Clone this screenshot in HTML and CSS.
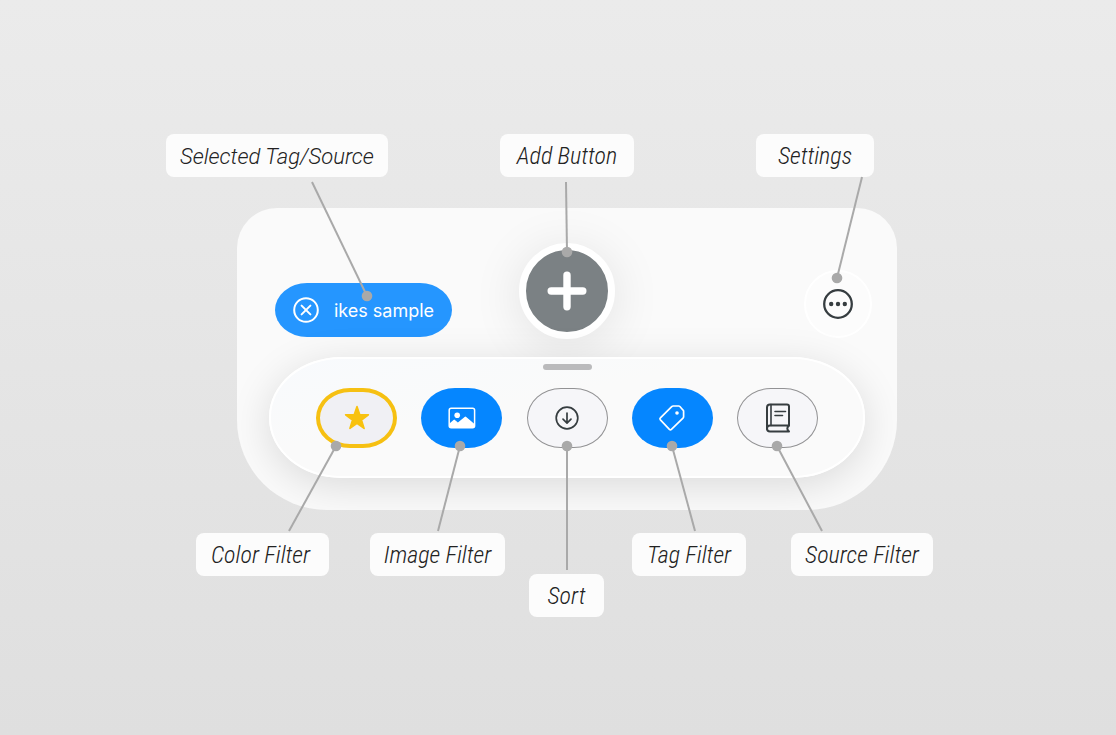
FILE: index.html
```
<!DOCTYPE html>
<html lang="en">
<head>
  <meta charset="UTF-8" />
  <meta name="viewport" content="width=device-width, initial-scale=1" />
  <title>Toolbar overview</title>
  <link rel="stylesheet" href="styles.css">
</head>
<body>
  <main class="diagram">
    <div class="labels labels-top">
      <span class="label label-wide label-selected">Selected Tag/Source</span>
      <span class="label label-add">Add Button</span>
      <span class="label label-settings">Settings</span>
    </div>

    <section class="panel">
      <div class="panel-top">
        <button class="selected-tag" type="button">
          <svg width="26" height="26" viewBox="0 0 26 26" fill="none" stroke="#fff" stroke-width="2" stroke-linecap="round">
            <circle cx="13" cy="13" r="11.8" />
            <path d="M8.6 8.6l8.8 8.8M17.4 8.6l-8.8 8.8" />
          </svg>
          ikes sample
        </button>
        <button class="add-button" type="button" aria-label="Add">
          <svg width="40" height="40" viewBox="0 0 40 40" stroke="#fff" stroke-width="7.4" stroke-linecap="round">
            <path d="M20 4.2v31.6M4.2 20h31.6" />
          </svg>
        </button>
        <button class="settings-button" type="button" aria-label="Settings">
          <svg width="30" height="30" viewBox="0 0 30 30" fill="#363d40">
            <circle cx="15" cy="15" r="13.8" fill="none" stroke="#363d40" stroke-width="2.3" />
            <circle cx="8.2" cy="15" r="2.2" />
            <circle cx="15" cy="15" r="2.2" />
            <circle cx="21.8" cy="15" r="2.2" />
          </svg>
        </button>
      </div>

      <div class="tray">
        <div class="handle"></div>
        <div class="filters">
          <button class="pill pill-color" type="button" aria-label="Color filter">
            <svg width="26" height="26" viewBox="0 0 26 26" fill="#f8c20f" stroke="#f8c20f" stroke-width="1.6" stroke-linejoin="round">
              <path d="M13 1.6l2.8 8.2h8.6l-6.9 5.2 2.6 8.4L13 18.3l-7.1 5.1L8.5 15 1.6 9.8h8.6z" />
            </svg>
          </button>
          <button class="pill pill-on" type="button" aria-label="Image filter">
            <svg width="28" height="22" viewBox="0 0 28 22">
              <rect x="1.2" y="1.2" width="25.4" height="19.6" rx="2" fill="none" stroke="#fff" stroke-width="1.5" />
              <circle cx="9.2" cy="8.2" r="2.8" fill="#fff" />
              <path d="M1.5 16.5l4-3.6q.7-.6 1.4 0l3 2.6 6.7-5.6q.8-.6 1.6 0l8.3 7.1v1.8q0 2-2 2h-21q-2 0-2-2z" fill="#fff" />
            </svg>
          </button>
          <button class="pill" type="button" aria-label="Sort">
            <svg width="24" height="24" viewBox="0 0 24 24" fill="none" stroke="#363d40" stroke-width="1.7" stroke-linecap="round" stroke-linejoin="round">
              <circle cx="12" cy="12" r="10.8" />
              <path d="M12 7v10M8 13.2l4 3.9 4-3.9" />
            </svg>
          </button>
          <button class="pill pill-on" type="button" aria-label="Tag filter">
            <svg width="28" height="28" viewBox="0 0 28 28" fill="none" stroke="#fff" stroke-width="1.7" stroke-linejoin="round">
              <path d="M15.2 2h5.4q.8 0 1.3.5l3.2 3.7q.5.5.5 1.2v5.3q0 .8-.6 1.4L13.4 25.3q-1 1-2 0l-9-9.4q-1-1.1 0-2.1L13.7 2.6q.6-.6 1.5-.6z" />
              <circle cx="19" cy="9" r="1.8" fill="#fff" stroke="none" />
            </svg>
          </button>
          <button class="pill" type="button" aria-label="Source filter">
            <svg width="26" height="32" viewBox="0 0 26 32" fill="none" stroke="#363d40" stroke-width="2" stroke-linecap="round" stroke-linejoin="round">
              <path d="M24 23.5V4.4q0-2-2-2H5q-3 0-3 3V27" />
              <path d="M24 23.6H5q-3 0-3 3t3 3h19q-3.4-3 0-6z" />
              <path d="M6 2.5v21" stroke-width="1.6" />
              <path d="M10 9.5h10.5M10 13.5h7.5" stroke-width="1.6" />
            </svg>
          </button>
        </div>
      </div>
    </section>

    <div class="labels labels-bottom">
      <span class="label label-color">Color Filter</span>
      <span class="label label-image">Image Filter</span>
      <span class="label label-sort">Sort</span>
      <span class="label label-tag">Tag Filter</span>
      <span class="label label-source">Source Filter</span>
    </div>

    <!-- leader lines from each label to its control -->
    <svg class="leaders" width="784" height="483" viewBox="0 0 784 483">
      <g stroke="#a9a9a9" stroke-width="2">
        <path d="M146 48l55 114" />
        <path d="M400 48l1 70" />
        <path d="M696 43l-25 101" />
        <path d="M170 312l-47 85" />
        <path d="M294 312l-22 85" />
        <path d="M401 312v124" />
        <path d="M506 312l23 85" />
        <path d="M611 312l45 85" />
      </g>
      <g fill="#a9a9a9">
        <circle cx="201" cy="162" r="5.3" />
        <circle cx="401" cy="118" r="5.3" />
        <circle cx="671" cy="144" r="5.3" />
        <circle cx="170" cy="312" r="5.3" />
        <circle cx="294" cy="312" r="5.3" />
        <circle cx="401" cy="312" r="5.3" />
        <circle cx="506" cy="312" r="5.3" />
        <circle cx="611" cy="312" r="5.3" />
      </g>
    </svg>
  </main>
</body>
</html>
```

FILE: styles.css
```
* {
  box-sizing: border-box;
}

body {
  margin: 0;
  min-height: 100vh;
  padding: 134px 16px 40px;
  background: linear-gradient(#ebebeb, #dfdfdf);
  color: #222;
}

button {
  border: none;
  padding: 0;
  cursor: pointer;
  display: flex;
  align-items: center;
  justify-content: center;
}

.diagram {
  position: relative;
  width: 784px;
  margin: 0 auto;
}

.leaders {
  position: absolute;
  top: 0;
  left: 0;
  pointer-events: none;
}

/* labels */
.labels {
  display: grid;
  align-items: start;
  justify-items: start;
}

.labels-top {
  grid-template-columns: 334px 256px auto;
}

.labels-bottom {
  grid-template-columns: 174px 159px 103px 159px auto;
  padding-left: 30px;
}

.label {
  padding-top: 2px;
  font-family: "Roboto Condensed", Roboto, sans-serif;
  font-style: italic;
  font-weight: 300;
  font-size: 24px;
  line-height: 41px;
  text-align: center;
  white-space: nowrap;
  background: #fcfcfc;
  border-radius: 8px;
}

.label-wide {
  font-family: Roboto, sans-serif;
  font-size: 22px;
}

.label-selected {
  width: 222px;
}

.label-add {
  width: 134px;
}

.label-settings {
  width: 118px;
}

.label-color {
  width: 133px;
  padding-right: 4px;
}

.label-image {
  width: 135px;
}

.label-sort {
  width: 75px;
  margin-top: 41px;
}

.label-tag {
  width: 114px;
}

.label-source {
  width: 142px;
}

/* panel */
.panel {
  margin: 31px 53px 23px 71px;
  padding: 35px 0 32px;
  background: #fafafa;
  border-radius: 40px 40px 90px 90px;
  overflow: hidden;
}

.panel-top {
  display: grid;
  grid-template-columns: 1fr auto 1fr;
  align-items: end;
}

.selected-tag {
  width: 177px;
  height: 54px;
  margin: 0 0 2px 38px;
  gap: 15px;
  border-radius: 32px / 27px;
  background: #2596ff;
  color: #fff;
  font-family: Inter, sans-serif;
  font-size: 18px;
}

.add-button {
  width: 96px;
  height: 96px;
  border: 7px solid #fff;
  border-radius: 50%;
  background: #7b8184;
  box-shadow: 0 6px 50px rgba(0, 0, 0, 0.1);
}

.settings-button {
  width: 68px;
  height: 68px;
  margin: 0 25px 1px 0;
  justify-self: end;
  border: 2px solid #fff;
  border-radius: 50%;
  background: #fcfcfc;
}

.tray {
  position: relative;
  margin: 18px 32px 0;
  padding: 5px 45px 28px;
  border: 2px solid #fff;
  border-radius: 72px / 60px;
  background: linear-gradient(to bottom right, #f8fafd, #fafafa 40%);
  box-shadow: 0 8px 40px rgba(0, 0, 0, 0.13);
}

.handle {
  width: 49px;
  height: 6px;
  margin: 0 auto 18px;
  border-radius: 3px;
  background: #bababc;
}

.filters {
  display: flex;
  justify-content: space-between;
}

.pill {
  width: 81px;
  height: 60px;
  border: 1px solid #929294;
  border-radius: 34px / 30px;
  background: #f6f6f9;
}

.pill-color {
  border: 4px solid #f6c012;
  background: #f0f0f4;
}

.pill-on {
  border: none;
  background: #0586ff;
}
```
